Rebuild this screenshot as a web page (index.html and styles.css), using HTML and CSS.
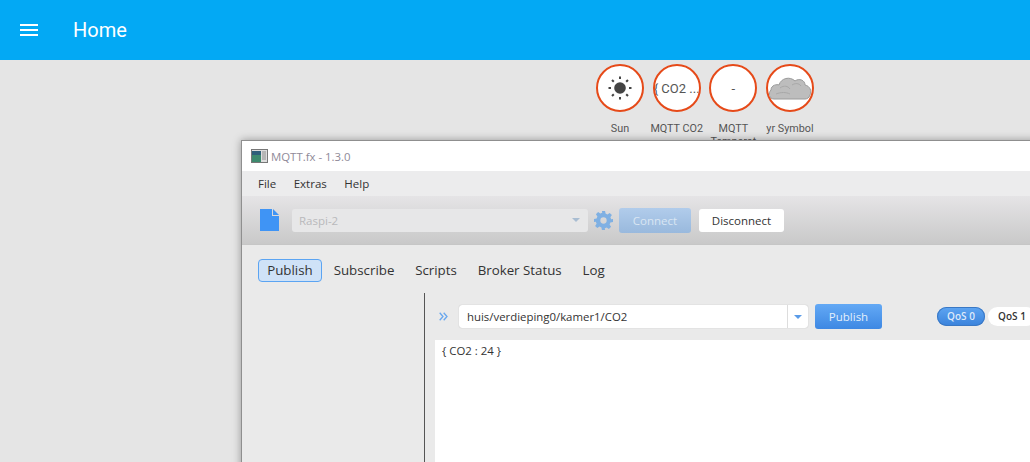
FILE: index.html
```html
<!DOCTYPE html>
<html lang="en">
<head>
  <meta charset="UTF-8" />
  <title>Home</title>
  <link rel="stylesheet" href="styles.css">
</head>
<body>
  <header class="topbar">
    <svg class="menu-icon" width="18" height="12" viewBox="0 0 18 12"><path d="M0 0h18v2H0zM0 5h18v2H0zM0 10h18v2H0z" fill="#fff"/></svg>
    <h1>Home</h1>
  </header>

  <main class="dashboard">
    <div class="tiles">
      <div class="tile">
        <div class="circle">
          <svg width="24" height="24" viewBox="0 0 24 24" fill="#444">
            <circle cx="12" cy="12" r="5.800"/>
            <g stroke="#444" stroke-width="2">
              <path d="M12 0.500v2.500M12 21v2.500M0.500 12h2.500M21 12h2.500M4 4l1.800 1.800M18.200 18.200L20 20M4 20l1.800-1.800M18.200 5.800L20 4"/>
            </g>
          </svg>
        </div>
        <div class="tile-label">Sun</div>
      </div>
      <div class="tile">
        <div class="circle circle-text">{ CO2 ...</div>
        <div class="tile-label">MQTT CO2</div>
      </div>
      <div class="tile">
        <div class="circle circle-text">-</div>
        <div class="tile-label">MQTT Temperat</div>
      </div>
      <div class="tile">
        <div class="circle">
          <svg width="44" height="26" viewBox="0 0 44 26">
            <path d="M6 24 C1 24 0 18 3 15 C3 10 9 9 11 10 C13 3 22 1 27 6 C31 3 37 5 37 10 C42 11 44 16 42 20 C41 23 39 24 37 24 Z" fill="#bdbdbd" stroke="#9a9a9a" stroke-width="1"/>
            <path d="M12 13c4-3 8-2 10 1M24 10c3-2 7-2 9 1M8 19c5-2 10-2 14 0" fill="none" stroke="#a8a8a8" stroke-width="1"/>
          </svg>
        </div>
        <div class="tile-label">yr Symbol</div>
      </div>
    </div>
  </main>

  <section class="mqtt-window">
    <div class="titlebar">
      <svg width="17" height="14" viewBox="0 0 17 14">
        <rect x="0.5" y="0.5" width="16" height="13" fill="#ddd" stroke="#777"/>
        <rect x="1" y="2" width="9" height="11" fill="#3d8a6e"/>
        <rect x="1" y="2" width="9" height="4" fill="#2f5f7a"/>
        <rect x="11" y="2" width="4" height="9" fill="#b5b5b5"/>
      </svg>
      <span>MQTT.fx - 1.3.0</span>
    </div>
    <nav class="menubar">
      <span>File</span>
      <span>Extras</span>
      <span>Help</span>
    </nav>
    <div class="toolbar">
      <svg class="file-icon" width="19" height="22" viewBox="0 0 19 22">
        <path d="M0 0h12v7h7v15H0z" fill="#3f94f5"/>
        <path d="M13 0l6 6h-6z" fill="#3f94f5"/>
      </svg>
      <div class="profile-select">
        <span>Raspi-2</span>
        <i class="caret caret-muted"></i>
      </div>
      <svg class="gear" width="19" height="19" viewBox="0 0 24 24">
        <path fill="#7fb0e3" fill-rule="evenodd" d="M10 0h4l.6 3.300 2.400 1 2.800-1.900 2.800 2.800L20.700 8l1 2.400L24 10v4l-3.300.6-1 2.400 1.900 2.800-2.800 2.800L16 20.700l-2.400 1L14 24h-4l-.6-3.300-2.400-1-2.800 1.900-2.800-2.800L3.300 16l-1-2.400L0 14v-4l3.300-.6 1-2.400-1.900-2.800 2.800-2.800L8 3.300l2.400-1zM12 8a4 4 0 1 0 0 8 4 4 0 0 0 0-8z"/>
      </svg>
      <button class="btn-connect">Connect</button>
      <button class="btn-disconnect">Disconnect</button>
    </div>
    <div class="tabs">
      <span class="tab tab-active">Publish</span>
      <span class="tab">Subscribe</span>
      <span class="tab">Scripts</span>
      <span class="tab">Broker Status</span>
      <span class="tab">Log</span>
    </div>
    <div class="publish-pane">
      <div class="pane-side"></div>
      <div class="pane-main">
        <div class="topic-row">
          <svg class="chevrons" width="9" height="9" viewBox="0 0 9 9" fill="none" stroke="#6aa8ee" stroke-width="1.300">
            <path d="M0.700 0.700L4 4.500 0.700 8.300M4.700 0.700L8 4.500 4.700 8.300"/>
          </svg>
          <div class="topic-input">
            <span class="topic-text">huis/verdieping0/kamer1/CO2</span>
            <span class="topic-arrow"><i class="caret"></i></span>
          </div>
          <button class="btn-publish">Publish</button>
          <div class="qos">
            <span class="qos-pill qos-on">QoS 0</span>
            <span class="qos-pill">QoS 1</span>
          </div>
        </div>
        <div class="payload">{ CO2 : 24 }</div>
      </div>
    </div>
  </section>
</body>
</html>
```

FILE: styles.css
```css
html, body {
  height: 100%;
}
body {
  margin: 0;
  background-color: #e5e5e5;
  font-family: Roboto, sans-serif;
  overflow: hidden;
  position: relative;
}
.topbar {
  height: 60px;
  background-color: #03a9f4;
  color: #fff;
  display: flex;
  align-items: center;
  padding-left: 20px;
}
.topbar h1 {
  margin: 0 0 0 35px;
  font-size: 20px;
  font-weight: 400;
}
.menu-icon {
  flex: none;
}

.dashboard {
  padding: 4px 0 0 591.700px;
}
.tiles {
  display: flex;
}
.tile {
  width: 56.670px;
  text-align: center;
}
.circle {
  width: 44px;
  height: 44px;
  margin: 0 auto;
  border: 2px solid #e64a19;
  border-radius: 50%;
  background-color: #fff;
  display: flex;
  align-items: center;
  justify-content: center;
  color: #555;
  overflow: hidden;
}
.circle-text {
  font-size: 13px;
  white-space: nowrap;
}
.tile-label {
  margin-top: 11px;
  font-size: 10.800px;
  line-height: 12.500px;
  color: #555;
}

.mqtt-window {
  position: absolute;
  left: 241px;
  top: 140px;
  width: 820px;
  height: 340px;
  background-color: #eaeaea;
  border: 1px solid #8f8f8f;
  box-shadow: 0 0 8px rgba(0, 0, 0, 0.35);
  font-family: "Open Sans", sans-serif;
  color: #333;
}
.titlebar {
  height: 30px;
  background-color: #fff;
  display: flex;
  align-items: center;
  gap: 3px;
  padding-left: 9px;
  font-size: 11.400px;
  color: #8f8a98;
}
.menubar {
  height: 25px;
  display: flex;
  align-items: center;
  gap: 17.500px;
  padding-left: 16px;
  font-size: 11.500px;
  background-color: #ececed;
}
.toolbar {
  height: 49px;
  box-sizing: border-box;
  border-bottom: 1px solid #c6c6c6;
  background: linear-gradient(#e5e4e6, #c9c9c9);
  display: flex;
  align-items: center;
  padding-left: 18px;
}
.file-icon {
  flex: none;
}
.profile-select {
  width: 296px;
  height: 23px;
  box-sizing: border-box;
  margin-left: 13px;
  padding: 0 8px 0 7px;
  background-color: #e7e7e8;
  border-radius: 3px;
  display: flex;
  align-items: center;
  justify-content: space-between;
  font-size: 11.500px;
  color: #b9b9bc;
}
.caret {
  display: block;
  width: 0;
  height: 0;
  border-left: 4px solid transparent;
  border-right: 4px solid transparent;
  border-top: 4px solid #5a9be8;
}
.caret-muted {
  border-top-color: #a9bdd2;
}
.gear {
  margin-left: 6px;
  flex: none;
}
.btn-connect, .btn-disconnect, .btn-publish {
  font-family: inherit;
  font-size: 11.500px;
  border: none;
  border-radius: 3px;
  padding: 0;
}
.btn-connect {
  width: 72px;
  height: 25px;
  margin-left: 6px;
  background: linear-gradient(#b1cceb, #99b9dd);
  color: #d9e6f3;
}
.btn-disconnect {
  width: 85px;
  height: 23px;
  margin-left: 8px;
  background-color: #fff;
  color: #333;
}

.tabs {
  height: 48px;
  box-sizing: border-box;
  padding: 3px 0 0 16px;
  display: flex;
  align-items: center;
  gap: 2.800px;
  font-size: 13.300px;
}
.tab {
  padding: 0 8px;
  height: 21px;
  line-height: 20px;
  border: 1px solid transparent;
  border-radius: 4px;
}
.tab-active {
  background-color: #cfe2f7;
  border-color: #5ba4f2;
  padding: 0 8.200px;
}
.publish-pane {
  display: flex;
  height: 170px;
}
.pane-side {
  width: 182px;
  flex: none;
  border-right: 1px solid #555;
}
.pane-main {
  flex: 1;
  padding-left: 10px;
}
.topic-row {
  display: flex;
  align-items: center;
  height: 47px;
  padding-left: 4px;
}
.chevrons {
  flex: none;
}
.topic-input {
  width: 349px;
  height: 23px;
  margin-left: 11px;
  background-color: #fff;
  border-radius: 3px;
  display: flex;
  align-items: center;
  box-shadow: 0 0 1px rgba(0, 0, 0, 0.3);
}
.topic-text {
  flex: 1;
  padding-left: 8px;
  font-size: 11.400px;
  color: #333;
}
.topic-arrow {
  width: 20px;
  height: 100%;
  border-left: 1px solid #ddd;
  display: flex;
  align-items: center;
  justify-content: center;
}
.btn-publish {
  width: 67px;
  height: 25px;
  margin-left: 7px;
  background: linear-gradient(#63a9f5, #3e88e3);
  color: #e3effb;
}
.qos {
  display: flex;
  margin-left: 55px;
  gap: 3px;
}
.qos-pill {
  width: 48px;
  height: 19px;
  line-height: 18px;
  text-align: center;
  border-radius: 10px;
  background-color: #fff;
  font-size: 10px;
  font-weight: 600;
}
.qos-on {
  background: linear-gradient(#5ea5f2, #3a82db);
  box-shadow: inset 0 0 0 1px #3a78c4;
  color: #dfeafa;
}
.payload {
  background-color: #fff;
  height: 130px;
  padding: 3px 7px;
  font-size: 11.400px;
  color: #333;
}
```
